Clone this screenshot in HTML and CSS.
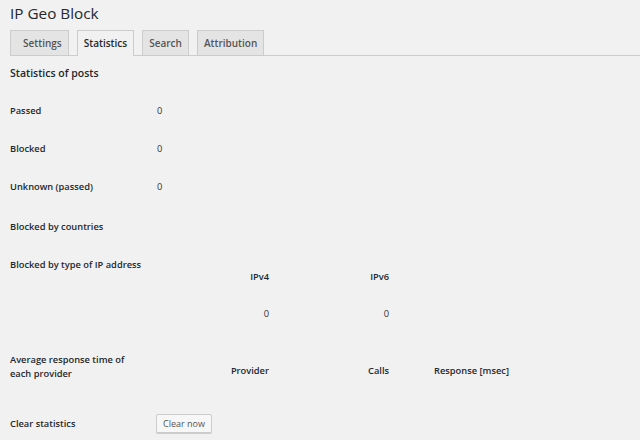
FILE: index.html
```html
<!DOCTYPE html>
<html>
<head>
<meta charset="utf-8">
<link rel="stylesheet" href="styles.css">
</head>
<body>
<div class="wrap">
  <h1 class="title">IP Geo Block</h1>
  <nav class="tabs">
    <span class="tab tab-first">Settings</span>
    <span class="tab tab-active">Statistics</span>
    <span class="tab">Search</span>
    <span class="tab">Attribution</span>
  </nav>
  <h3 class="section">Statistics of posts</h3>
  <table class="form-table">
    <tr><th>Passed</th><td>0</td></tr>
    <tr><th>Blocked</th><td>0</td></tr>
    <tr><th>Unknown (passed)</th><td>0</td></tr>
    <tr class="row-countries"><th>Blocked by countries</th><td></td></tr>
    <tr class="row-type">
      <th>Blocked by type of IP address</th>
      <td class="inner-cell">
        <table class="inner">
          <thead><tr><th class="c1">IPv4</th><th class="c2">IPv6</th></tr></thead>
          <tbody><tr><td class="c1">0</td><td class="c2">0</td></tr></tbody>
        </table>
      </td>
    </tr>
    <tr class="row-provider">
      <th>Average response time of each provider</th>
      <td class="inner-cell">
        <table class="inner provider">
          <thead><tr><th class="c1">Provider</th><th class="c2">Calls</th><th class="c3">Response [msec]</th></tr></thead>
        </table>
      </td>
    </tr>
    <tr class="row-clear">
      <th>Clear statistics</th>
      <td class="btn-cell"><button class="button">Clear now</button></td>
    </tr>
  </table>
</div>
</body>
</html>
```
FILE: styles.css
```css
html, body {
  margin: 0;
  padding: 0;
  background: #f1f1f1;
}
body {
  font-family: "Open Sans", "DejaVu Sans", sans-serif;
  color: #222;
}
.wrap {
  padding: 3px 0 0 10px;
}
.title {
  margin: 0;
  font-size: 15.3px;
  line-height: 20px;
  font-weight: 400;
  color: #23282d;
}
.tabs {
  display: flex;
  gap: 8px;
  margin-top: 7px;
  border-bottom: 1px solid #ccc;
  height: 25px;
}
.tab {
  display: block;
  height: 24px;
  line-height: 24px;
  padding: 0 6px;
  border: 1px solid #ccc;
  border-bottom: 0;
  background: #e4e4e4;
  color: #555;
  font-size: 10px;
  font-weight: 600;
}
.tab-first {
  padding-left: 12px;
}
.tab-active {
  background: #f1f1f1;
  color: #23282d;
  height: 25px;
}
.section {
  margin: 11px 0 13px;
  font-size: 10.5px;
  line-height: 12px;
  font-weight: 600;
  color: #23282d;
}
.form-table {
  border-collapse: collapse;
  border-spacing: 0;
  font-size: 9.3px;
  line-height: 14px;
}
.form-table > tbody > tr > th {
  width: 137px;
  padding: 12px 10px 12px 0;
  text-align: left;
  vertical-align: top;
  font-weight: 600;
  color: #23282d;
}
.form-table > tbody > tr > td {
  padding: 12px 0;
  vertical-align: top;
  color: #333;
}
.row-countries > th {
  padding-top: 14px !important;
}
.inner {
  border-collapse: collapse;
}
.inner th, .inner td {
  padding: 0;
  text-align: right;
}
.inner thead th {
  padding-top: 12px;
  padding-bottom: 9px;
  font-weight: 600;
  color: #23282d;
}
.inner tbody td {
  padding-top: 14px;
  padding-bottom: 8px;
  color: #333;
}
.provider thead th {
  padding-top: 11px;
  padding-bottom: 15px;
}
.inner .c1 {
  width: 112px;
}
.inner .c2 {
  width: 120px;
}
.inner .c3 {
  text-align: left;
  padding-left: 45px;
}
.form-table > tbody > tr > td.btn-cell {
  padding-top: 9px;
}
.button {
  display: block;
  margin: 0 0 0 -1px;
  height: 19px;
  padding: 0 6px;
  font-family: "Open Sans", "DejaVu Sans", sans-serif;
  font-size: 9px;
  line-height: 17px;
  color: #555;
  background: #f7f7f7;
  border: 1px solid #ccc;
  border-radius: 2px;
  box-shadow: 0 1px 0 #ccc;
}
```
